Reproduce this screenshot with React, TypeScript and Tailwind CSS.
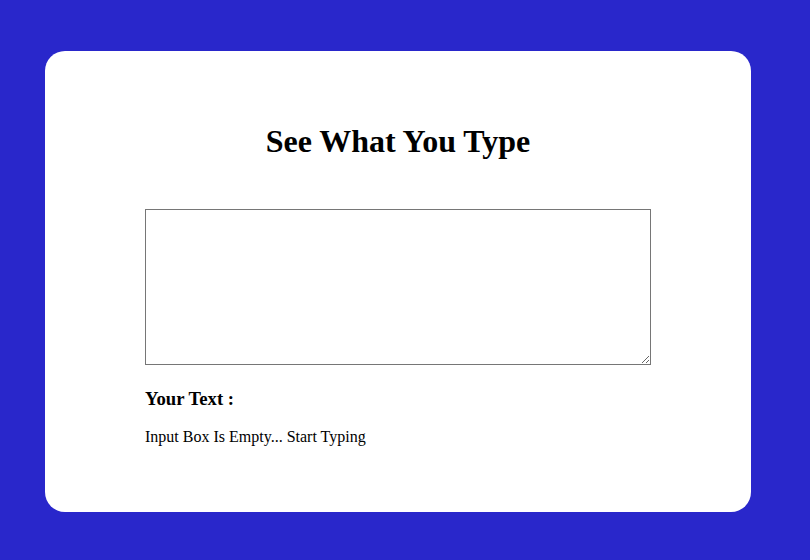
export default function App() {
  return (
    <div className="min-h-[560px] w-full bg-[#2927cb] pt-[51px] pl-[45px] pb-[49px] font-['Liberation_Serif',serif] text-black">
      <div className="w-[706px] h-[461px] rounded-[20px] bg-white px-[100px] pt-[72px]">
        <h1 className="text-center text-[32px] font-bold leading-[normal]">See What You Type</h1>
        <textarea className="mt-[49px] block h-[156px] w-[506px] border border-[#767676] bg-white p-[2px] text-[13px] outline-none" />
        <h3 className="mt-[23px] text-[18.72px] font-bold leading-[normal]">Your Text :</h3>
        <p className="mt-[18px] text-[16px] leading-[normal]">Input Box Is Empty... Start Typing</p>
      </div>
    </div>
  );
}
